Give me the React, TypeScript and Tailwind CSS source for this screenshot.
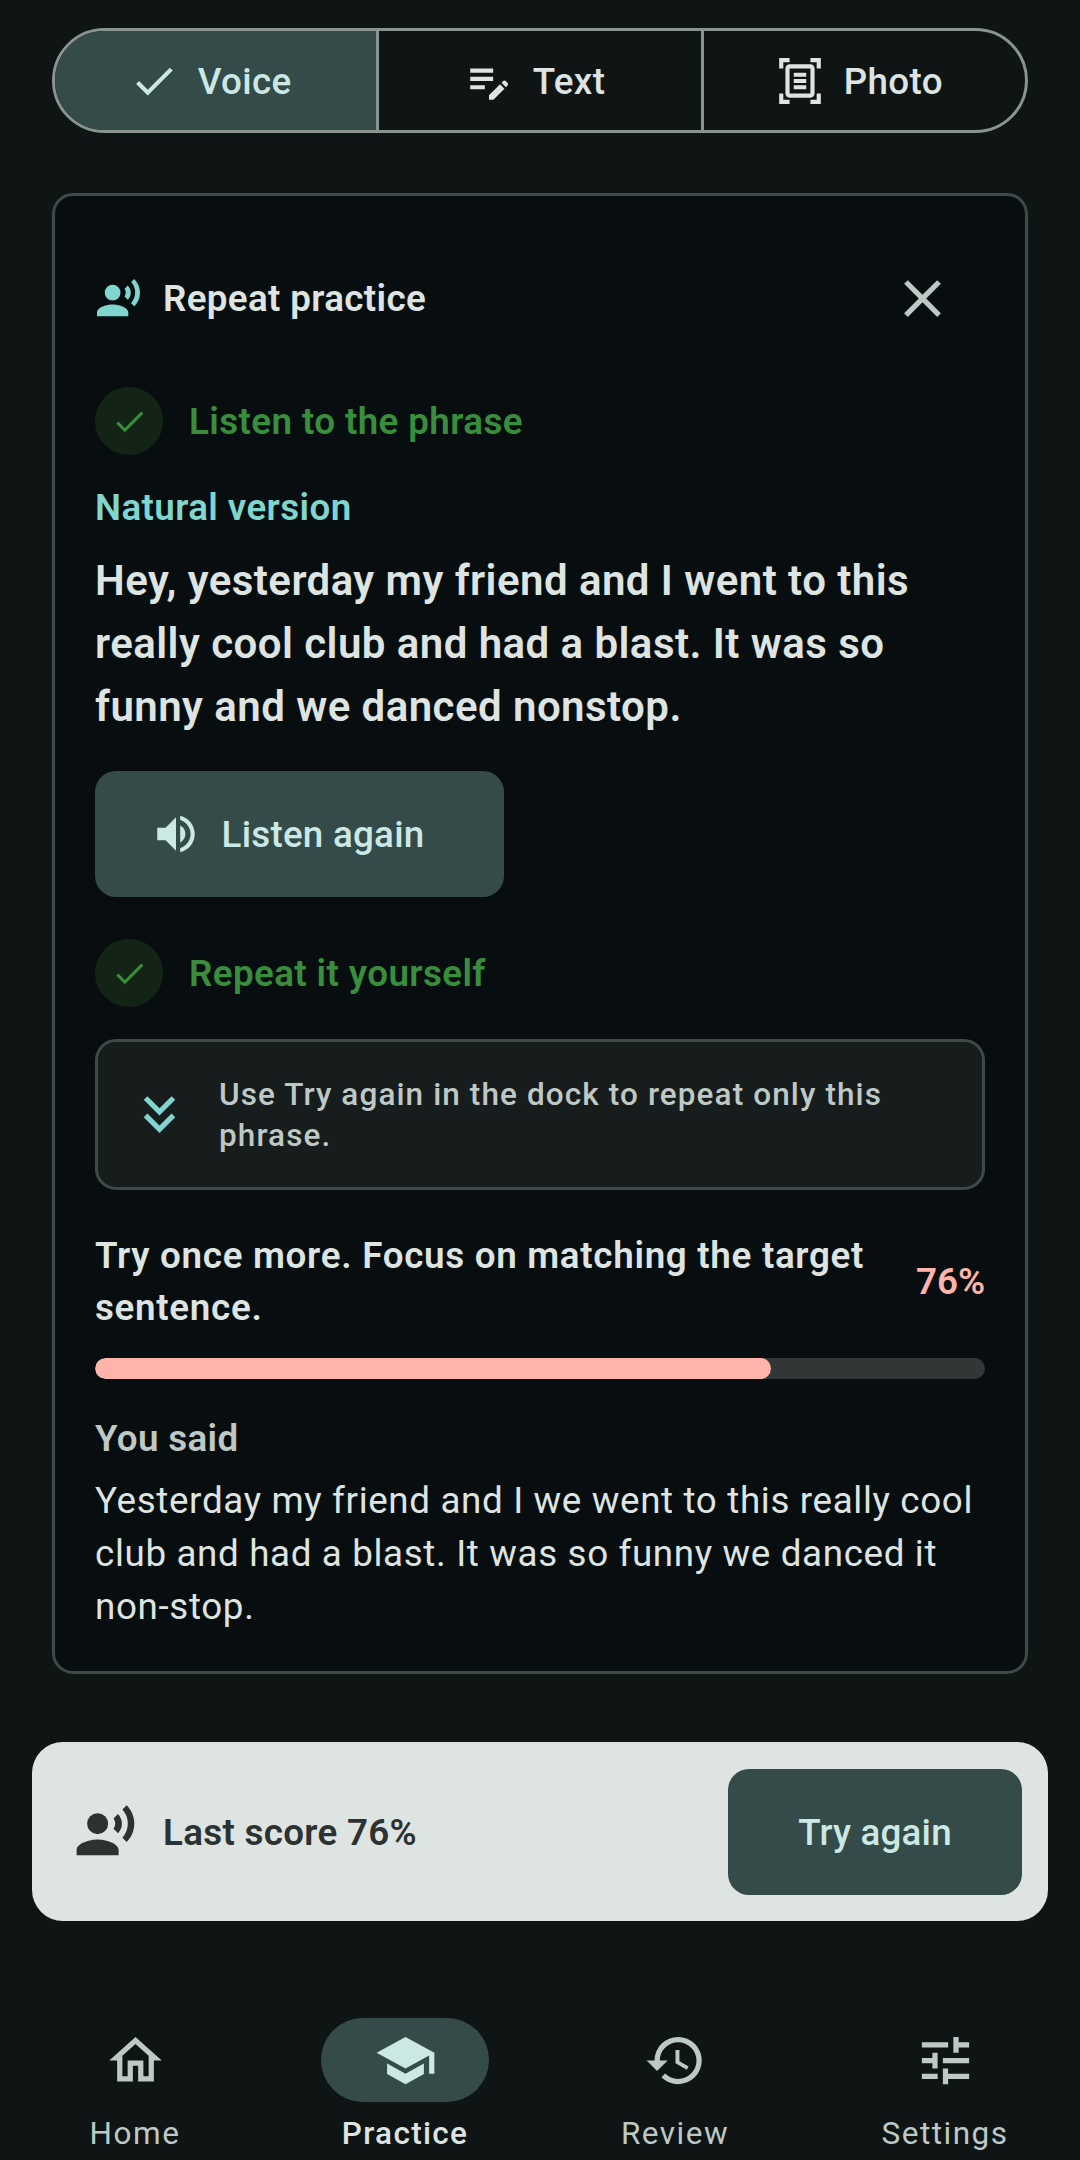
import {
  MdCheck,
  MdClose,
  MdEditNote,
  MdHistory,
  MdKeyboardDoubleArrowDown,
  MdOutlineDocumentScanner,
  MdOutlineHome,
  MdRecordVoiceOver,
  MdSchool,
  MdTune,
  MdVolumeUp,
} from "react-icons/md";

function Step({ label }: { label: string }) {
  return (
    <div className="flex items-center gap-[26px]">
      <span className="flex justify-center items-center w-[68px] h-[68px] rounded-full bg-[#132416] text-[#388e3c]">
        <MdCheck size={37} />
      </span>
      <span className="pt-[2px] text-[36.75px] leading-[52px] font-semibold tracking-[0.4px] text-[#388e3c]">
        {label}
      </span>
    </div>
  );
}

function NavItem({ icon, label, active }: { icon: React.ReactNode; label: string; active?: boolean }) {
  return (
    <div className="flex flex-col items-center">
      <span
        className={
          active
            ? "flex justify-center items-center w-[168px] h-[84px] rounded-full bg-[#354b49] text-[#cce8e4]"
            : "flex justify-center items-center w-[168px] h-[84px] rounded-full text-[#bec9c6]"
        }
      >
        {icon}
      </span>
      <span
        className={
          active
            ? "mt-[11px] text-[31.5px] leading-[42px] font-medium tracking-[1.3px] text-[#dee4e1]"
            : "mt-[11px] text-[31.5px] leading-[42px] tracking-[1.5px] text-[#bec9c6]"
        }
      >
        {label}
      </span>
    </div>
  );
}

export default function App() {
  return (
    <div className="w-[1080px] h-[2160px] overflow-hidden bg-[#0f1515] font-['Roboto',sans-serif] text-[#dee4e1]">
      <div className="px-[52px] pt-[28px]">
        <div className="flex h-[105px] rounded-full border-[3px] border-[#89938f] overflow-hidden">
          <div className="flex-1 flex justify-center items-center gap-[19px] pr-[11px] bg-[#354b49] text-[#cce8e4]">
            <MdCheck size={50} />
            <span className="pt-[2px] text-[36.75px] font-medium tracking-[0.35px]">Voice</span>
          </div>
          <div className="flex-1 flex justify-center items-center gap-[19px] pr-[11px] border-x-[3px] border-[#89938f]">
            <MdEditNote size={50} />
            <span className="pt-[2px] text-[36.75px] font-medium tracking-[0.35px]">Text</span>
          </div>
          <div className="flex-1 flex justify-center items-center gap-[19px] pr-[11px]">
            <MdOutlineDocumentScanner size={50} />
            <span className="pt-[2px] text-[36.75px] font-medium tracking-[0.35px]">Photo</span>
          </div>
        </div>

        <div className="mt-[60px] h-[1481px] rounded-[21px] border-[3px] border-[#3f4947] bg-[#080e0f] px-[40px] pt-[39px]">
          <div className="flex items-center justify-between h-[126px]">
            <div className="flex items-center gap-[21px]">
              <MdRecordVoiceOver size={47} className="text-[#80d5cf]" />
              <span className="pt-[1px] text-[36.75px] font-semibold tracking-[0.35px]">Repeat practice</span>
            </div>
            <span className="flex justify-center items-center w-[126px] h-[126px]">
              <MdClose size={63} className="text-[#bec9c6]" />
            </span>
          </div>

          <div className="mt-[26px]">
            <Step label="Listen to the phrase" />
          </div>
          <p className="mt-[27px] text-[36.75px] leading-[52px] font-semibold tracking-[0.4px] text-[#80d5cf]">
            Natural version
          </p>
          <p className="mt-[15px] text-[42px] leading-[63px] font-semibold tracking-[0.45px]">
            Hey, yesterday my friend and I went to this really cool club and had a blast. It was so funny and we danced
            nonstop.
          </p>
          <div className="mt-[33px] flex justify-center items-center gap-[21px] pr-[24px] w-[409px] h-[126px] rounded-[21px] bg-[#354b49] text-[#cce8e4]">
            <MdVolumeUp size={50} />
            <span className="pt-[1px] text-[36.75px] font-medium tracking-[0.25px]">Listen again</span>
          </div>
          <div className="mt-[42px]">
            <Step label="Repeat it yourself" />
          </div>
          <div className="mt-[32px] flex items-center gap-[28px] h-[151px] rounded-[21px] border-[3px] border-[#3f4947] bg-[#171d1d] pl-[30px] pr-[40px]">
            <MdKeyboardDoubleArrowDown size={63} className="shrink-0 text-[#80d5cf]" />
            <p className="text-[31.5px] leading-[41px] font-medium tracking-[1.1px] text-[#bec9c6]">
              Use Try again in the dock to repeat only this phrase.
            </p>
          </div>
          <div className="mt-[40px] flex items-center justify-between gap-[42px]">
            <p className="text-[36.75px] leading-[52px] font-semibold tracking-[0.7px]">
              Try once more. Focus on matching the target sentence.
            </p>
            <span className="text-[36.75px] font-semibold text-[#ffb4ab]">76%</span>
          </div>
          <div className="mt-[24px] h-[21px] rounded-full bg-[#323637] overflow-hidden">
            <div className="h-full w-[76%] rounded-full bg-[#ffb4ab]" />
          </div>
          <p className="mt-[34px] text-[36.75px] leading-[52px] font-semibold tracking-[0.35px] text-[#bec9c6]">
            You said
          </p>
          <p className="mt-[9px] text-[36.75px] leading-[53px] tracking-[0.65px]">
            Yesterday my friend and I we went to this really cool club and had a blast. It was so funny we danced it
            non-stop.
          </p>
        </div>
      </div>

      <div className="mx-[32px] mt-[68px] h-[179px] rounded-[31px] bg-[#dee4e1] flex items-center justify-between pl-[42px] pr-[26px]">
        <div className="flex items-center gap-[26px]">
          <MdRecordVoiceOver size={63} className="text-[#2b3231]" />
          <span className="pt-[2px] text-[36.75px] font-semibold tracking-[0.3px] text-[#2b3231]">Last score 76%</span>
        </div>
        <div className="flex justify-center items-center w-[294px] h-[126px] rounded-[21px] bg-[#354b49] text-[#cce8e4]">
          <span className="pt-[2px] text-[36.75px] font-medium tracking-[0.2px]">Try again</span>
        </div>
      </div>

      <div className="mt-[97px] grid grid-cols-4">
        <NavItem icon={<MdOutlineHome size={63} />} label="Home" />
        <NavItem icon={<MdSchool size={63} />} label="Practice" active />
        <NavItem icon={<MdHistory size={63} />} label="Review" />
        <NavItem icon={<MdTune size={63} />} label="Settings" />
      </div>
    </div>
  );
}
